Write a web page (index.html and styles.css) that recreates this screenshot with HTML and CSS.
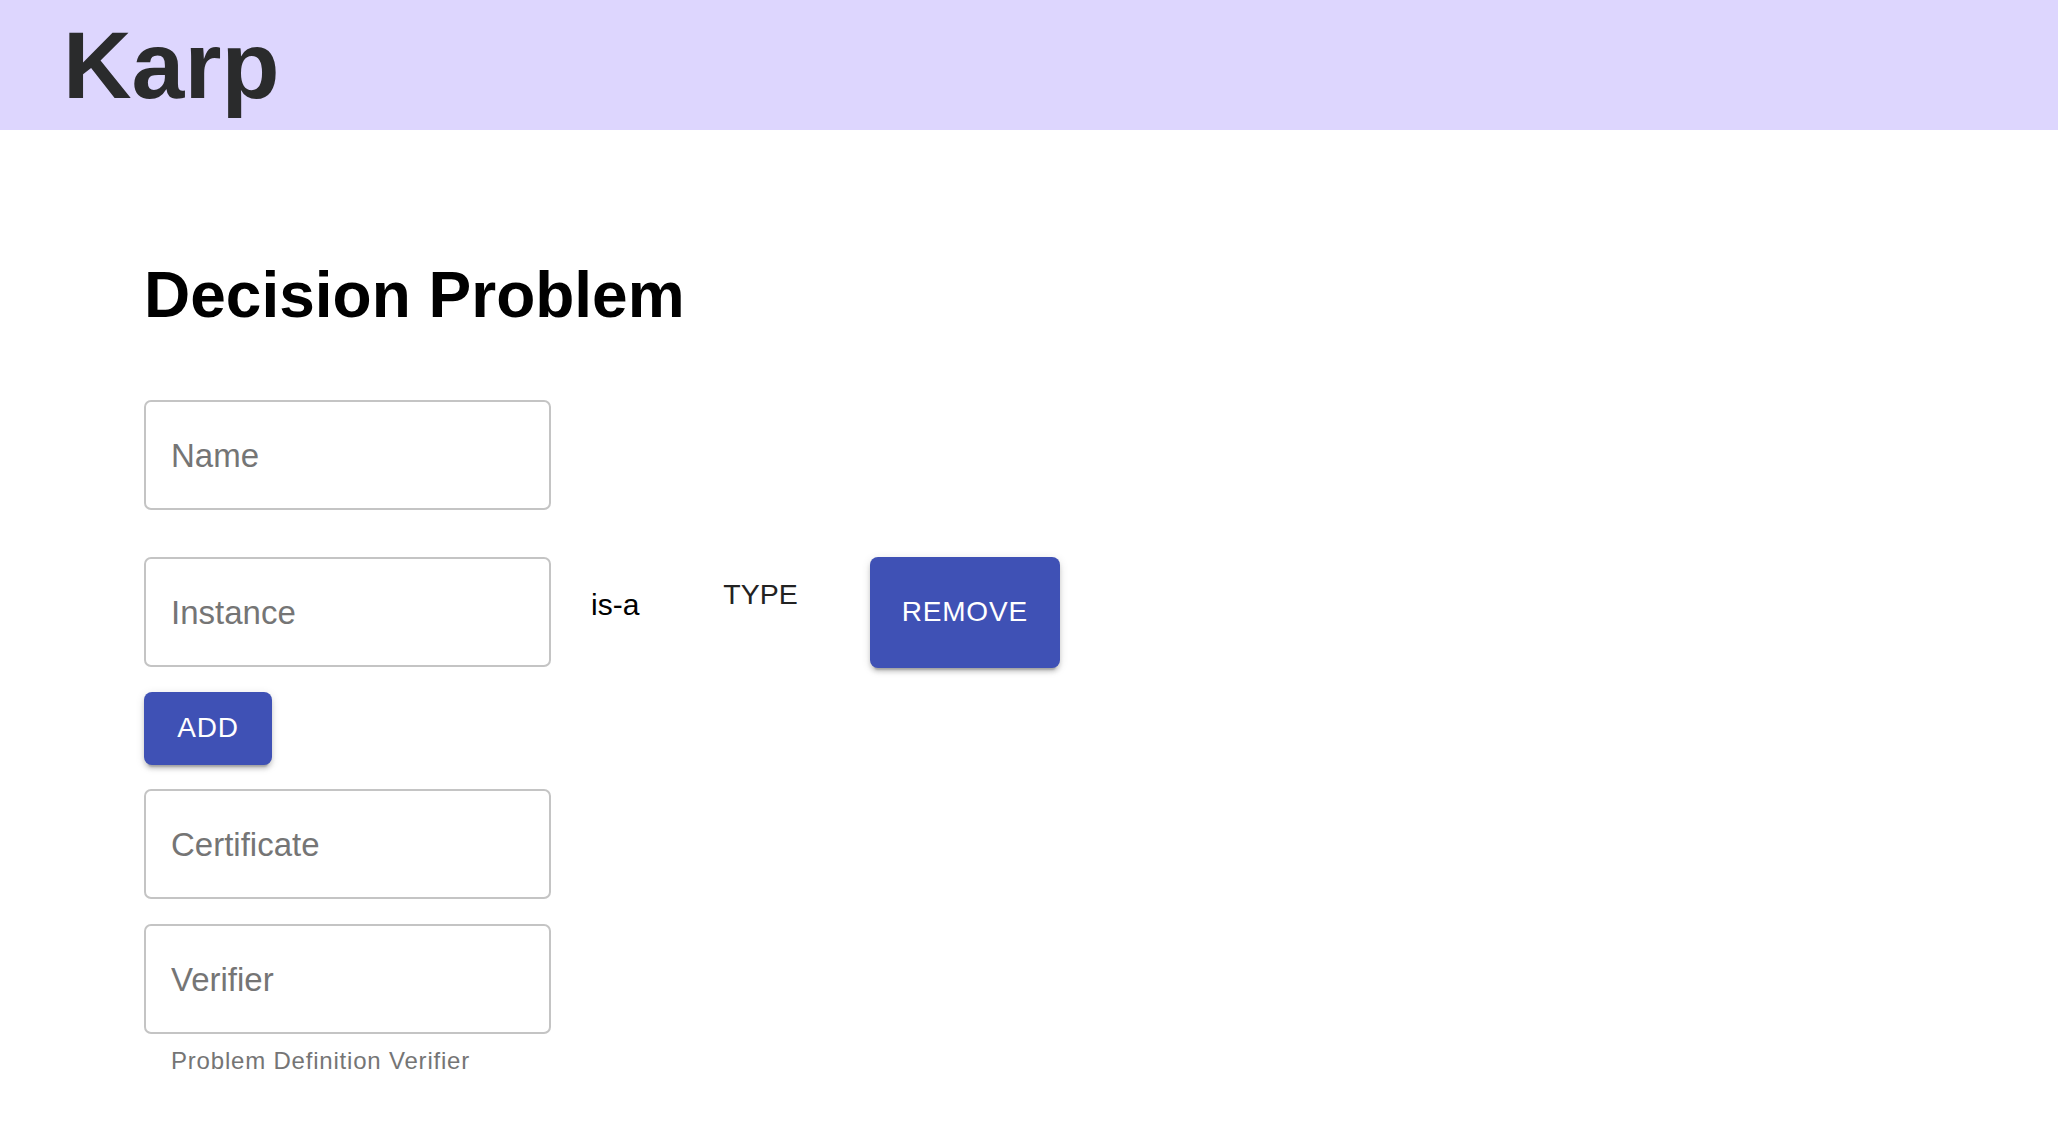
FILE: index.html
```html
<!DOCTYPE html>
<html lang="en">
<head>
<meta charset="utf-8">
<title>Karp</title>
<link rel="stylesheet" href="styles.css">
</head>
<body>
<header class="topbar">
  <div class="brand">Karp</div>
</header>
<main class="content">
  <h1 class="title">Decision Problem</h1>
  <form class="form">
    <input class="field" type="text" placeholder="Name">
    <div class="instance-row">
      <input class="field" type="text" placeholder="Instance">
      <span class="isa">is-a</span>
      <span class="type">TYPE</span>
      <button type="button" class="btn btn-remove">REMOVE</button>
    </div>
    <button type="button" class="btn btn-add">ADD</button>
    <input class="field field-cert" type="text" placeholder="Certificate">
    <div class="field-group">
      <input class="field" type="text" placeholder="Verifier">
      <p class="helper">Problem Definition Verifier</p>
    </div>
  </form>
</main>
</body>
</html>
```
FILE: styles.css
```css
* { box-sizing: border-box; }
html, body { margin: 0; padding: 0; background: #ffffff; }
body { font-family: "Liberation Sans", Arial, sans-serif; color: #000; }

.topbar {
  height: 130px;
  background: #ddd6fe;
  padding-left: 63px;
}
.brand {
  font-size: 95px;
  font-weight: 700;
  line-height: 130px;
  color: #2a2b2c;
}

.content {
  padding: 127px 0 0 144px;
}
.title {
  margin: 0;
  font-size: 64px;
  font-weight: 700;
  line-height: 76.8px;
  color: #000;
}

.form {
  display: flex;
  flex-direction: column;
  align-items: flex-start;
  margin-top: 66px;
}

.field {
  display: block;
  width: 407px;
  height: 110px;
  border: 2px solid #c4c4c4;
  border-radius: 7px;
  padding: 3px 25px 0 25px;
  font-family: "Liberation Sans", Arial, sans-serif;
  font-size: 33px;
  color: #222;
  background: #fff;
  outline: none;
  margin: 0;
}
.field::placeholder { color: #757575; opacity: 1; }

.instance-row {
  display: flex;
  align-items: flex-start;
  margin-top: 47px;
}
.isa {
  margin: 31px 0 0 40px;
  font-size: 30px;
  line-height: 34px;
  color: #000;
}
.type {
  margin: 21px 0 0 84px;
  font-size: 28.5px;
  line-height: 32px;
  color: #222;
}

.btn {
  border: none;
  border-radius: 8px;
  background: #3f51b5;
  color: #fff;
  font-family: "Liberation Sans", Arial, sans-serif;
  font-size: 28px;
  letter-spacing: 0.8px;
  padding: 0;
  box-shadow: 0 6px 2px -4px rgba(0,0,0,0.2), 0 4px 4px 0 rgba(0,0,0,0.14), 0 2px 10px 0 rgba(0,0,0,0.12);
  cursor: pointer;
}
.btn-remove {
  width: 190px;
  height: 111px;
  margin-left: 72px;
}
.btn-add {
  width: 128px;
  height: 73px;
  margin-top: 24px;
}

.field-cert { margin-top: 24px; }
.field-group { margin-top: 25px; }

.helper {
  margin: 13px 0 0 27px;
  font-size: 24px;
  letter-spacing: 0.8px;
  color: #757575;
}
```
